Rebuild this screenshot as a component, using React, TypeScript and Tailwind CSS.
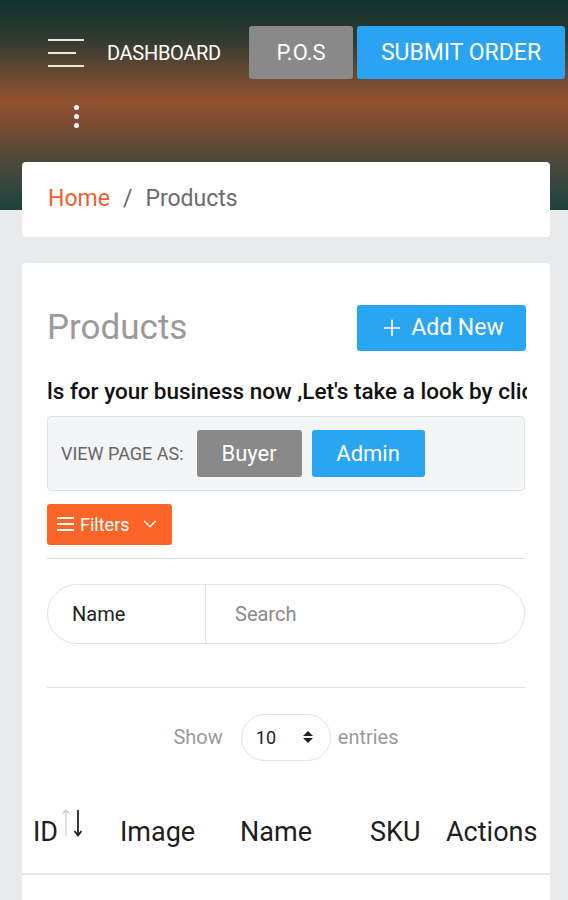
import React from 'react';
import { Plus, ChevronDown } from 'lucide-react';

const font = { fontFamily: 'Roboto, "Liberation Sans", sans-serif' };

function Burger({ className = '' }: { className?: string }) {
  return (
    <div className={`flex flex-col gap-[11px] ${className}`}>
      <span className="block h-[2px] w-[36px] bg-[#efe4d8]" />
      <span className="block h-[2px] w-[28px] bg-[#efe4d8]" />
      <span className="block h-[2px] w-[36px] bg-[#efe4d8]" />
    </div>
  );
}

export default function App() {
  return (
    <div className="min-h-[900px] w-[568px] overflow-hidden bg-[#e9eaec]" style={font}>
      {/* Header */}
      <div className="h-[210px] bg-[linear-gradient(180deg,#0f3230_0%,#2f3a30_18%,#6a4a32_36%,#93512f_48%,#7a4c33_60%,#4f4a3a_75%,#1d4440_100%)]">
        <div className="flex items-center pt-[26px]">
          <Burger className="ml-[48px]" />
          <span className="ml-[23px] w-[120px] whitespace-nowrap text-[20px] tracking-[-0.3px] text-white">DASHBOARD</span>
          <button className="ml-[22px] h-[53px] w-[104px] rounded-[3px] bg-[#898989] text-[22px] text-white">P.O.S</button>
          <button className="ml-[4px] h-[53px] w-[208px] rounded-[3px] bg-[#2aa3f2] pt-[2px] text-[23px] text-white">SUBMIT ORDER</button>
        </div>
        <div className="ml-[73px] mt-[26px] flex w-[6px] flex-col items-center gap-[4px]">
          <span className="block h-[5px] w-[5px] rounded-full bg-white" />
          <span className="block h-[5px] w-[5px] rounded-full bg-white" />
          <span className="block h-[5px] w-[5px] rounded-full bg-white" />
        </div>
      </div>

      {/* Breadcrumb */}
      <div className="ml-[22px] mr-[18px] -mt-[48px] flex h-[75px] items-center rounded-[4px] bg-white px-[26px] text-[23px]">
        <span className="text-[#e9622b]">Home</span>
        <span className="mx-[13px] text-[#666]">/</span>
        <span className="text-[#6b6b6b]">Products</span>
      </div>

      {/* Main card */}
      <div className="ml-[22px] mr-[18px] mt-[26px] rounded-t-[4px] bg-white pb-[40px]">
        <div className="px-[25px] pt-[39px]">
          <div className="flex items-center justify-between">
            <h1 className="text-[35px] font-normal text-[#9a9a9a]">Products</h1>
            <button className="-mr-[1px] flex h-[46px] w-[169px] items-center justify-center gap-[6px] rounded-[3px] bg-[#2aa5f2] text-[23px] text-white">
              <Plus size={26} strokeWidth={1.5} />
              Add New
            </button>
          </div>
          <div className="mt-[21px] w-[480px] overflow-hidden whitespace-nowrap text-[22.5px] font-medium leading-[30px] text-[#111]">
            ls for your business now ,Let's take a look by clicking the button below
          </div>
          <div className="mt-[10px] flex h-[75px] items-center rounded-[4px] border border-[#e2e3e4] bg-[#f4f5f6] px-[13px]">
            <span className="whitespace-nowrap text-[18px] text-[#666]">VIEW PAGE AS:</span>
            <button className="ml-[13px] h-[47px] w-[105px] rounded-[3px] bg-[#898989] text-[22px] text-white">Buyer</button>
            <button className="ml-[10px] h-[47px] w-[113px] rounded-[3px] bg-[#2aa5f2] text-[22px] text-white">Admin</button>
          </div>
          <button className="mt-[13px] flex h-[41px] w-[125px] items-center rounded-[3px] bg-[#fb6628] pl-[10px] text-[18px] text-white">
            <span className="flex flex-col gap-[4px]">
              <span className="block h-[2px] w-[17px] bg-white" />
              <span className="block h-[2px] w-[17px] bg-white" />
              <span className="block h-[2px] w-[17px] bg-white" />
            </span>
            <span className="ml-[6px]">Filters</span>
            <ChevronDown size={22} strokeWidth={1.4} className="ml-[9px]" />
          </button>
          <div className="mt-[13px] h-[1px] bg-[#dcdcdc]" />
          <div className="mt-[25px] flex h-[60px] items-center rounded-full border border-[#e3e3e3]">
            <div className="flex h-full w-[158px] items-center border-r border-[#e3e3e3] pl-[24px] text-[20px] text-[#222]">Name</div>
            <div className="pl-[29px] text-[20px] text-[#8a8a8a]">Search</div>
          </div>
          <div className="mt-[43px] h-[1px] bg-[#e1e1e1]" />
          <div className="mt-[26px] flex items-center justify-center text-[20px] text-[#9a9a9a]">
            <span>Show</span>
            <div className="ml-[18px] flex h-[47px] w-[90px] items-center rounded-full border border-[#e3e3e3] pl-[14px] pr-[16px] text-[18px] text-[#222]">
              <span>10</span>
              <svg className="ml-auto" width="12" height="14" viewBox="0 0 12 14">
                <path d="M6 1 L11 6 H1 Z" fill="#222" />
                <path d="M6 13 L11 8 H1 Z" fill="#222" />
              </svg>
            </div>
            <span className="ml-[7px]">entries</span>
          </div>
        </div>
        <div className="mt-[37px] flex h-[77px] items-center border-b-2 border-[#e6e6e6] pb-[6px] text-[27px] text-[#1e1e1e]">
          <div className="ml-[11px] flex w-[87px] items-start">
            <span>ID</span>
            <svg className="-mt-[4px] ml-[2px]" width="26" height="30" viewBox="0 0 26 30">
              <path d="M6 2 V28 M2.5 6 L6 2 L9.5 6" stroke="#cfcfcf" strokeWidth="1.3" fill="none" />
              <path d="M18 2 V27" stroke="#222" strokeWidth="1.8" fill="none" />
              <path d="M14.5 23 L18 27.5 L21.5 23" stroke="#222" strokeWidth="1.8" fill="none" />
            </svg>
          </div>
          <span className="w-[120px]">Image</span>
          <span className="w-[130px]">Name</span>
          <span className="w-[76px]">SKU</span>
          <span>Actions</span>
        </div>
      </div>
    </div>
  );
}
